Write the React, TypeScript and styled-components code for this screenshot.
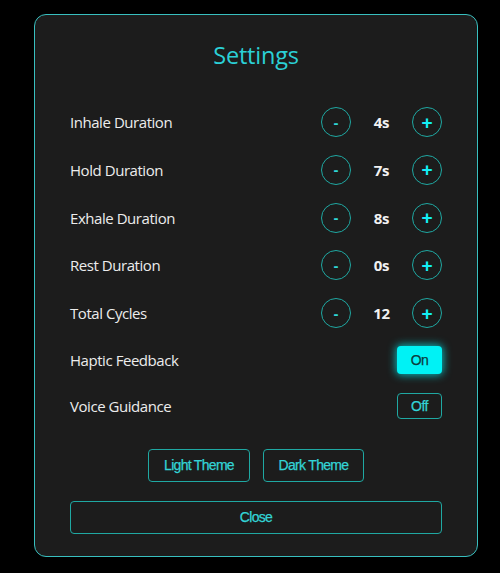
import React, { useState } from "react";
import styled, { createGlobalStyle } from "styled-components";

const Global = createGlobalStyle`
  html, body { margin: 0; padding: 0; background: #000; }
  body { font-family: "Open Sans", "Noto Sans", sans-serif; }
`;

const Page = styled.div`
  width: 500px;
  height: 573px;
  background: #000;
  padding: 14px 0 0 34px;
  box-sizing: border-box;
`;

const Panel = styled.div`
  width: 444px;
  height: 543px;
  box-sizing: border-box;
  background: #1c1c1c;
  border: 1px solid #38bfbf;
  border-radius: 12px;
  padding: 24px 35px 0;
  display: flex;
  flex-direction: column;
`;

const Title = styled.h2`
  margin: 0 0 36px;
  height: 32px;
  line-height: 32px;
  text-align: center;
  font-family: "Open Sans", sans-serif;
  font-weight: 400;
  font-size: 23.5px;
  letter-spacing: -0.2px;
  color: #2bd0d6;
`;

const Rows = styled.div`
  display: flex;
  flex-direction: column;
  gap: 17.75px;
`;

const Row = styled.div<{ $h: number }>`
  height: ${(p) => p.$h}px;
  display: flex;
  align-items: center;
  justify-content: space-between;
`;

const Label = styled.span`
  font-family: "Open Sans", sans-serif;
  font-size: 15px;
  color: #ececec;
  letter-spacing: -0.45px;
`;

const Stepper = styled.div`
  display: flex;
  align-items: center;
  gap: 10px;
`;

const Circle = styled.button<{ $plus?: boolean }>`
  width: 30px;
  height: 30px;
  border-radius: 50%;
  border: 1.5px solid #1fa8a2;
  background: transparent;
  padding: 0;
  display: flex;
  align-items: center;
  justify-content: center;
  color: ${(p) => (p.$plus ? "#12eef5" : "#2fd6d6")};
  font-family: "Liberation Sans", Arial, sans-serif;
  font-weight: 700;
  font-size: ${(p) => (p.$plus ? "19px" : "15px")};
  line-height: 1;
  cursor: pointer;
`;

const Value = styled.span`
  width: 41px;
  text-align: center;
  font-family: "Open Sans", sans-serif;
  font-weight: 700;
  font-size: 15px;
  letter-spacing: -0.3px;
  color: #f2f2f2;
`;

const Toggle = styled.button<{ $on: boolean }>`
  width: 45px;
  height: ${(p) => (p.$on ? 28 : 26)}px;
  border-radius: 4px;
  box-sizing: border-box;
  padding: 0;
  font-family: "Liberation Sans", Arial, sans-serif;
  font-size: 14px;
  letter-spacing: -0.5px;
  -webkit-text-stroke: 0.25px currentColor;
  cursor: pointer;
  ${(p) =>
    p.$on
      ? `background: #00f2f5; color: #0c3b3d; border: none; box-shadow: 0 0 9px 1px rgba(0, 240, 245, 0.75);`
      : `background: transparent; color: #33d4d6; border: 1.5px solid #1fa8a2;`}
`;

const ThemeRow = styled.div`
  margin-top: 29px;
  display: flex;
  justify-content: center;
  gap: 13px;
`;

const OutlineButton = styled.button<{ $w?: number }>`
  width: ${(p) => (p.$w ? `${p.$w}px` : "100%")};
  height: 33px;
  box-sizing: border-box;
  background: transparent;
  border: 1.5px solid #1fa8a2;
  border-radius: 4px;
  color: #33d4d6;
  font-family: "Liberation Sans", Arial, sans-serif;
  font-size: 14px;
  letter-spacing: -0.7px;
  -webkit-text-stroke: 0.25px currentColor;
  cursor: pointer;
  padding: 0;
`;

const CloseWrap = styled.div`
  margin-top: 19px;
`;

const steppers = [
  { label: "Inhale Duration", value: 4, unit: "s" },
  { label: "Hold Duration", value: 7, unit: "s" },
  { label: "Exhale Duration", value: 8, unit: "s" },
  { label: "Rest Duration", value: 0, unit: "s" },
  { label: "Total Cycles", value: 12, unit: "" },
];

export default function App() {
  const [vals, setVals] = useState(steppers.map((s) => s.value));
  const [haptic, setHaptic] = useState(true);
  const [voice, setVoice] = useState(false);

  const change = (i: number, d: number) =>
    setVals((v) => v.map((x, j) => (j === i ? Math.max(0, x + d) : x)));

  return (
    <>
      <Global />
      <Page>
        <Panel>
          <Title>Settings</Title>
          <Rows>
            {steppers.map((s, i) => (
              <Row $h={30} key={s.label}>
                <Label>{s.label}</Label>
                <Stepper>
                  <Circle onClick={() => change(i, -1)}>-</Circle>
                  <Value>
                    {vals[i]}
                    {s.unit}
                  </Value>
                  <Circle $plus onClick={() => change(i, 1)}>
                    +
                  </Circle>
                </Stepper>
              </Row>
            ))}
            <Row $h={28}>
              <Label>Haptic Feedback</Label>
              <Toggle $on={haptic} onClick={() => setHaptic(!haptic)}>
                {haptic ? "On" : "Off"}
              </Toggle>
            </Row>
            <Row $h={28}>
              <Label>Voice Guidance</Label>
              <Toggle $on={voice} onClick={() => setVoice(!voice)}>
                {voice ? "On" : "Off"}
              </Toggle>
            </Row>
          </Rows>
          <ThemeRow>
            <OutlineButton $w={102}>Light Theme</OutlineButton>
            <OutlineButton $w={101}>Dark Theme</OutlineButton>
          </ThemeRow>
          <CloseWrap>
            <OutlineButton>Close</OutlineButton>
          </CloseWrap>
        </Panel>
      </Page>
    </>
  );
}
